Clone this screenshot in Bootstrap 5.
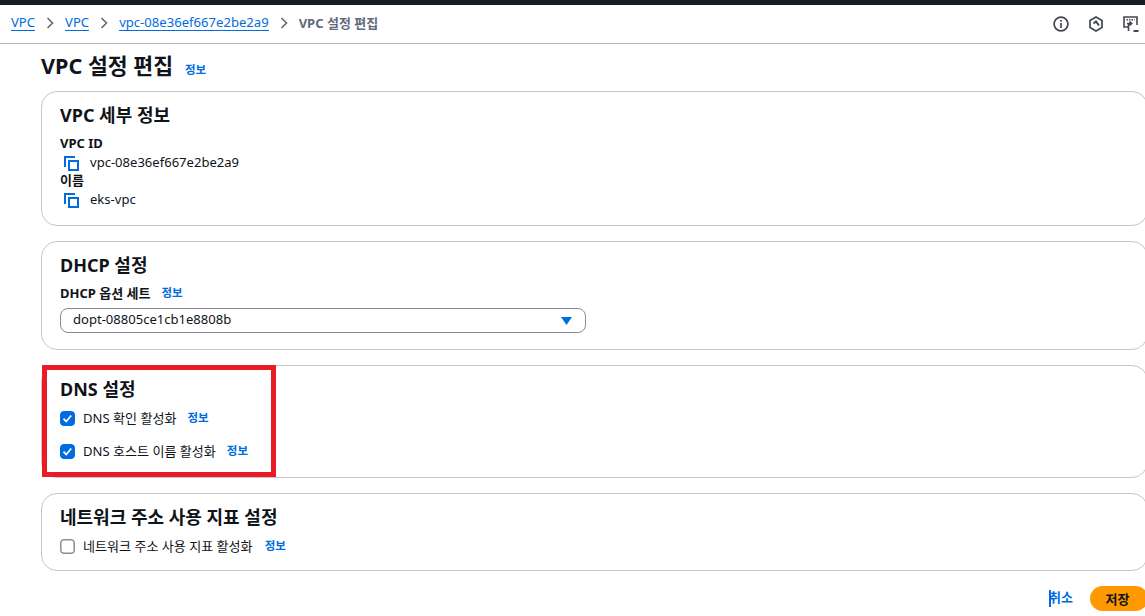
<!DOCTYPE html>
<html lang="ko">
<head>
  <meta charset="UTF-8">
  <meta name="viewport" content="width=device-width, initial-scale=1.0">
  <title>VPC 설정 편집</title>
  <link href="https://cdn.jsdelivr.net/npm/bootstrap@5.3.0/dist/css/bootstrap.min.css" rel="stylesheet">
  <style>
    html, body { height: 616px; overflow: hidden; }
    body { font-family: "Noto Sans", "Noto Sans CJK KR", sans-serif; font-size: 13.05px; line-height: 18px; color: #0f141a; background: #fff; border-top: 5px solid #161d26; }
    a { color: #006ce0; }
    .crumb-bar { height: 39px; padding: 0 6px 0 11px; border-bottom: 1px solid #b4b4bb; }
    .crumb-list { gap: 11px; padding-bottom: 3px; }
    .crumb-list a { font-size: 13.1px; text-decoration: none; border-bottom: 1px solid #006ce0; line-height: 15px; }
    .crumb-now { font-size: 13px; font-weight: 700; color: #5f6b7a; }
    .crumb-sep { width: 8px; height: 12px; color: #656871; display: block; }
    .top-icons { gap: 20px; padding: 0 0 1px 0; }
    .page-area { padding: 0 0 0 41px; margin-right: -3px; }
    .page-title { font-size: 21.6px; line-height: 30px; font-weight: 700; margin: 7px 0 10px; color: #0f141a; }
    .title-info { margin-top: 8px; margin-left: 4px; }
    .info-link { font-size: 11.5px; font-weight: 600; text-decoration: none; line-height: 14px; }
    .info-gap { margin-left: 3px; }
    .panel-box { border: 1px solid #c6c6cd; border-radius: 16px; background: #fff; padding: 12px 18px 0; margin-bottom: 15px; position: relative; }
    .panel-title { font-size: 18px; line-height: 22px; font-weight: 700; margin: 0 0 8px; color: #0f141a; }
    .field-name { font-weight: 700; font-size: 13px; line-height: 18px; }
    .value-row { gap: 11px; height: 19px; padding-left: 4px; }
    .copy-ico { width: 15px; height: 15px; display: block; margin-top: 4px; }
    .dhcp-label { margin-bottom: 6px; }
    .select-box { width: 526px; height: 25px; border: 1px solid #8c8c94; border-radius: 8px; padding: 0 13px 4px 12px; }
    .arrow-down { width: 11px; height: 8px; display: block; margin-top: 4px; }
    .check-ico { width: 15px; height: 15px; border-radius: 4px; flex: none; display: block; }
    .check-row { gap: 8px; height: 18px; }
    .dns-first { margin-top: 9px; }
    .dns-next { margin-top: 15px; }
    .usage-row { margin-top: 9px; }
    .red-frame { position: absolute; left: 0; top: -1px; width: 234px; height: 112px; border: 5px solid #e81c24; pointer-events: none; }
    .action-link { font-size: 13px; font-weight: 700; color: #006ce0; border-left: 2px solid #006ce0; line-height: 15px; height: 17px; margin-right: 17px; }
    .action-text { margin-left: -2px; }
    .save-btn { background: #ff9900; color: #0f141a; font-weight: 700; font-size: 13px; line-height: 16px; border: 0; border-radius: 14px; width: 58px; height: 25px; padding: 0 3px 0 0; }
  </style>
</head>
<body>
  <div class="crumb-bar d-flex align-items-center justify-content-between">
    <div class="crumb-list d-flex align-items-center">
      <a href="#">VPC</a>
      <svg class="crumb-sep" viewBox="0 0 8 12" fill="none" stroke="currentColor" stroke-width="1.6"><path d="M1.5 1l5 5-5 5"/></svg>
      <a href="#">VPC</a>
      <svg class="crumb-sep" viewBox="0 0 8 12" fill="none" stroke="currentColor" stroke-width="1.6"><path d="M1.5 1l5 5-5 5"/></svg>
      <a href="#">vpc-08e36ef667e2be2a9</a>
      <svg class="crumb-sep" viewBox="0 0 8 12" fill="none" stroke="currentColor" stroke-width="1.6"><path d="M1.5 1l5 5-5 5"/></svg>
      <span class="crumb-now">VPC 설정 편집</span>
    </div>
    <div class="top-icons d-flex align-items-center">
      <svg width="16" height="16" viewBox="0 0 16 16" fill="none" stroke="#424650" stroke-width="1.7"><circle cx="8" cy="8" r="6.9"/><path d="M8 7v5M8 4v1.8"/></svg>
      <svg width="14" height="16" viewBox="0 0 14 16" fill="none" stroke="#424650" stroke-width="1.7"><path d="M7 1l6 3.4v7.2L7 15l-6-3.4V4.4z"/><path d="M4.5 7.5L7 5.5l3 4" stroke-width="2"/></svg>
      <svg width="16" height="16" viewBox="0 0 16 16" fill="none" stroke="#424650" stroke-width="1.6"><path d="M6 11H1V1h13v8"/><path d="M3.5 3.8h8" stroke-width="1.4" stroke-dasharray="1.5 1"/><path d="M4 7.5h4.5M6.5 5.5l2.2 2-2.2 2M5.5 8v7"/><path d="M10.5 15h5" stroke-width="2"/></svg>
    </div>
  </div>

  <div class="page-area">
    <div class="page-title d-flex align-items-center gap-2">
      <span>VPC 설정 편집</span>
      <a class="info-link title-info" href="#">정보</a>
    </div>

    <div class="panel-box">
      <h2 class="panel-title">VPC 세부 정보</h2>
      <div class="field-name">VPC ID</div>
      <div class="value-row d-flex align-items-center">
        <svg class="copy-ico" viewBox="0 0 15 15" fill="none" stroke="#006ce0" stroke-width="2"><path d="M1 11V1h10"/><rect x="5" y="5" width="9" height="9"/></svg>
        <span>vpc-08e36ef667e2be2a9</span>
      </div>
      <div class="field-name">이름</div>
      <div class="value-row d-flex align-items-center">
        <svg class="copy-ico" viewBox="0 0 15 15" fill="none" stroke="#006ce0" stroke-width="2"><path d="M1 11V1h10"/><rect x="5" y="5" width="9" height="9"/></svg>
        <span>eks-vpc</span>
      </div>
      <div style="height:17px"></div>
    </div>

    <div class="panel-box">
      <h2 class="panel-title">DHCP 설정</h2>
      <div class="dhcp-label d-flex align-items-center gap-2">
        <span class="field-name">DHCP 옵션 세트</span>
        <a class="info-link info-gap" href="#">정보</a>
      </div>
      <div class="select-box d-flex align-items-center justify-content-between">
        <span>dopt-08805ce1cb1e8808b</span>
        <svg class="arrow-down" viewBox="0 0 11 8"><path fill="#006ce0" d="M0 0h11L5.5 8z"/></svg>
      </div>
      <div style="height:16px"></div>
    </div>

    <div class="panel-box">
      <div class="red-frame"></div>
      <h2 class="panel-title">DNS 설정</h2>
      <div class="check-row dns-first d-flex align-items-center">
        <svg class="check-ico" viewBox="0 0 15 15"><rect width="15" height="15" rx="3.5" fill="#006ce0"/><path d="M3.5 7.7l2.7 2.8 5-6" fill="none" stroke="#fff" stroke-width="1.8"/></svg>
        <span>DNS 확인 활성화</span>
        <a class="info-link info-gap" href="#">정보</a>
      </div>
      <div class="check-row dns-next d-flex align-items-center">
        <svg class="check-ico" viewBox="0 0 15 15"><rect width="15" height="15" rx="3.5" fill="#006ce0"/><path d="M3.5 7.7l2.7 2.8 5-6" fill="none" stroke="#fff" stroke-width="1.8"/></svg>
        <span>DNS 호스트 이름 활성화</span>
        <a class="info-link info-gap" href="#">정보</a>
      </div>
      <div style="height:17px"></div>
    </div>

    <div class="panel-box">
      <h2 class="panel-title">네트워크 주소 사용 지표 설정</h2>
      <div class="check-row usage-row d-flex align-items-center">
        <svg class="check-ico" viewBox="0 0 15 15"><rect x=".75" y=".75" width="13.5" height="13.5" rx="3" fill="#fff" stroke="#8c8c94" stroke-width="1.5"/></svg>
        <span>네트워크 주소 사용 지표 활성화</span>
        <a class="info-link ms-1" href="#">정보</a>
      </div>
      <div style="height:15px"></div>
    </div>

    <div class="d-flex justify-content-end align-items-center">
      <a class="action-link text-decoration-none" href="#"><span class="action-text">취소</span></a>
      <button class="save-btn" type="button">저장</button>
    </div>
  </div>

  <script src="https://cdn.jsdelivr.net/npm/bootstrap@5.3.0/dist/js/bootstrap.bundle.min.js"></script>
</body>
</html>
